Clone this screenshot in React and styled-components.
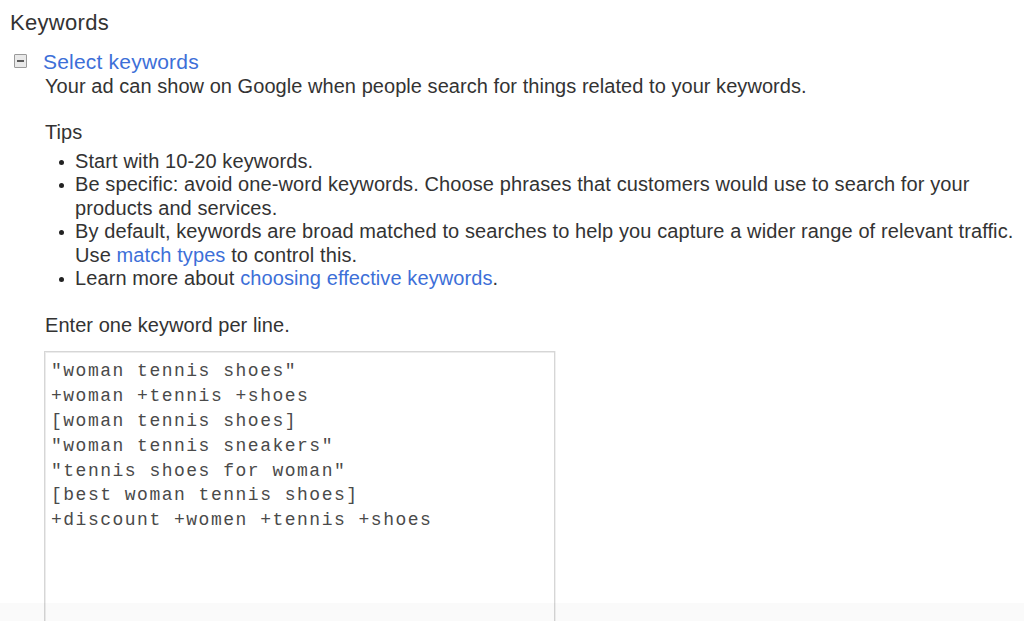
import React from "react";
import styled, { createGlobalStyle } from "styled-components";

const Global = createGlobalStyle`
  html, body { margin: 0; padding: 0; background: #ffffff; }
  body { font-family: "Liberation Sans", Arial, sans-serif; color: #333333; }
  body::after {
    content: "";
    position: fixed;
    left: 0; right: 0; bottom: 0;
    height: 18px;
    background: rgba(0, 0, 0, 0.018);
    pointer-events: none;
  }
`;

const Page = styled.div`
  padding: 10px 0 0 10px;
  overflow: hidden;
  height: 611px;
`;

const Heading = styled.h2`
  margin: 0;
  font-size: 22px;
  letter-spacing: 0.3px;
  line-height: 25px;
  font-weight: normal;
  color: #333333;
`;

const Section = styled.div`
  margin-top: 14px;
  display: grid;
  grid-template-columns: 33px 1fr;
`;

const ToggleCell = styled.div`
  padding-top: 5px;
  padding-left: 4px;
`;

const ToggleBox = styled.span`
  display: flex;
  align-items: center;
  justify-content: center;
  width: 11px;
  height: 12px;
  border: 1px solid #9a9a9a;
  border-radius: 1px;
  background: #e9e9e9;
  &::before {
    content: "";
    width: 7px;
    height: 2px;
    background: #5a5a5a;
  }
`;

const Body = styled.div`
  display: flex;
  flex-direction: column;
`;

const Link = styled.a`
  color: #3d6fd8;
  text-decoration: none;
`;

const Title = styled(Link)`
  font-size: 21px;
  letter-spacing: 0.2px;
  line-height: 25px;
  display: block;
`;

const Text = styled.p`
  margin: ${(p) => p.$mt || 0}px 0 0 ${(p) => p.$ml || 0}px;
  font-size: 20px;
  letter-spacing: 0.05px;
  line-height: ${(p) => p.$lh || 24}px;
  color: #333333;
`;

const Tips = styled.ul`
  list-style: none;
  margin: 6px 0 0 0;
  padding: 0 0 0 32px;
`;

const Tip = styled.li`
  position: relative;
  font-size: 20px;
  letter-spacing: 0.1px;
  line-height: 23.4px;
  color: #333333;
  &::before {
    content: "";
    position: absolute;
    left: -16px;
    top: 10px;
    width: 5px;
    height: 5px;
    border-radius: 50%;
    background: #222222;
  }
`;

const KeywordBox = styled.textarea`
  margin: 14px 0 0 1px;
  width: 511px;
  height: 290px;
  box-sizing: border-box;
  border: 1px solid #d6d6d6;
  box-shadow: inset 1px 1px 0 #ececec, 1px 0 0 #f0f0f0;
  padding: 7px 6px;
  font-family: "Liberation Mono", "Courier New", monospace;
  font-size: 18px;
  letter-spacing: 1.5px;
  line-height: 24.8px;
  color: #4a4a4a;
  background: #ffffff;
  resize: none;
  outline: none;
`;

const keywords = [
  '"woman tennis shoes"',
  "+woman +tennis +shoes",
  "[woman tennis shoes]",
  '"woman tennis sneakers"',
  '"tennis shoes for woman"',
  "[best woman tennis shoes]",
  "+discount +women +tennis +shoes",
].join("\n");

export default function App() {
  return (
    <>
      <Global />
      <Page>
        <Heading>Keywords</Heading>
        <Section>
          <ToggleCell>
            <ToggleBox />
          </ToggleCell>
          <Body>
            <Title href="#">Select keywords</Title>
            <Text $ml={2} $lh={25}>
              Your ad can show on Google when people search for things related to your keywords.
            </Text>
            <Text $ml={2} $mt={21}>Tips</Text>
            <Tips>
              <Tip>Start with 10-20 keywords.</Tip>
              <Tip>
                Be specific: avoid one-word keywords. Choose phrases that customers would use to search for your
                products and services.
              </Tip>
              <Tip>
                By default, keywords are broad matched to searches to help you capture a wider range of relevant traffic.
                Use <Link href="#">match types</Link> to control this.
              </Tip>
              <Tip>
                Learn more about <Link href="#">choosing effective keywords</Link>.
              </Tip>
            </Tips>
            <Text $ml={2} $mt={23}>Enter one keyword per line.</Text>
            <KeywordBox defaultValue={keywords} spellCheck={false} />
          </Body>
        </Section>
      </Page>
    </>
  );
}
